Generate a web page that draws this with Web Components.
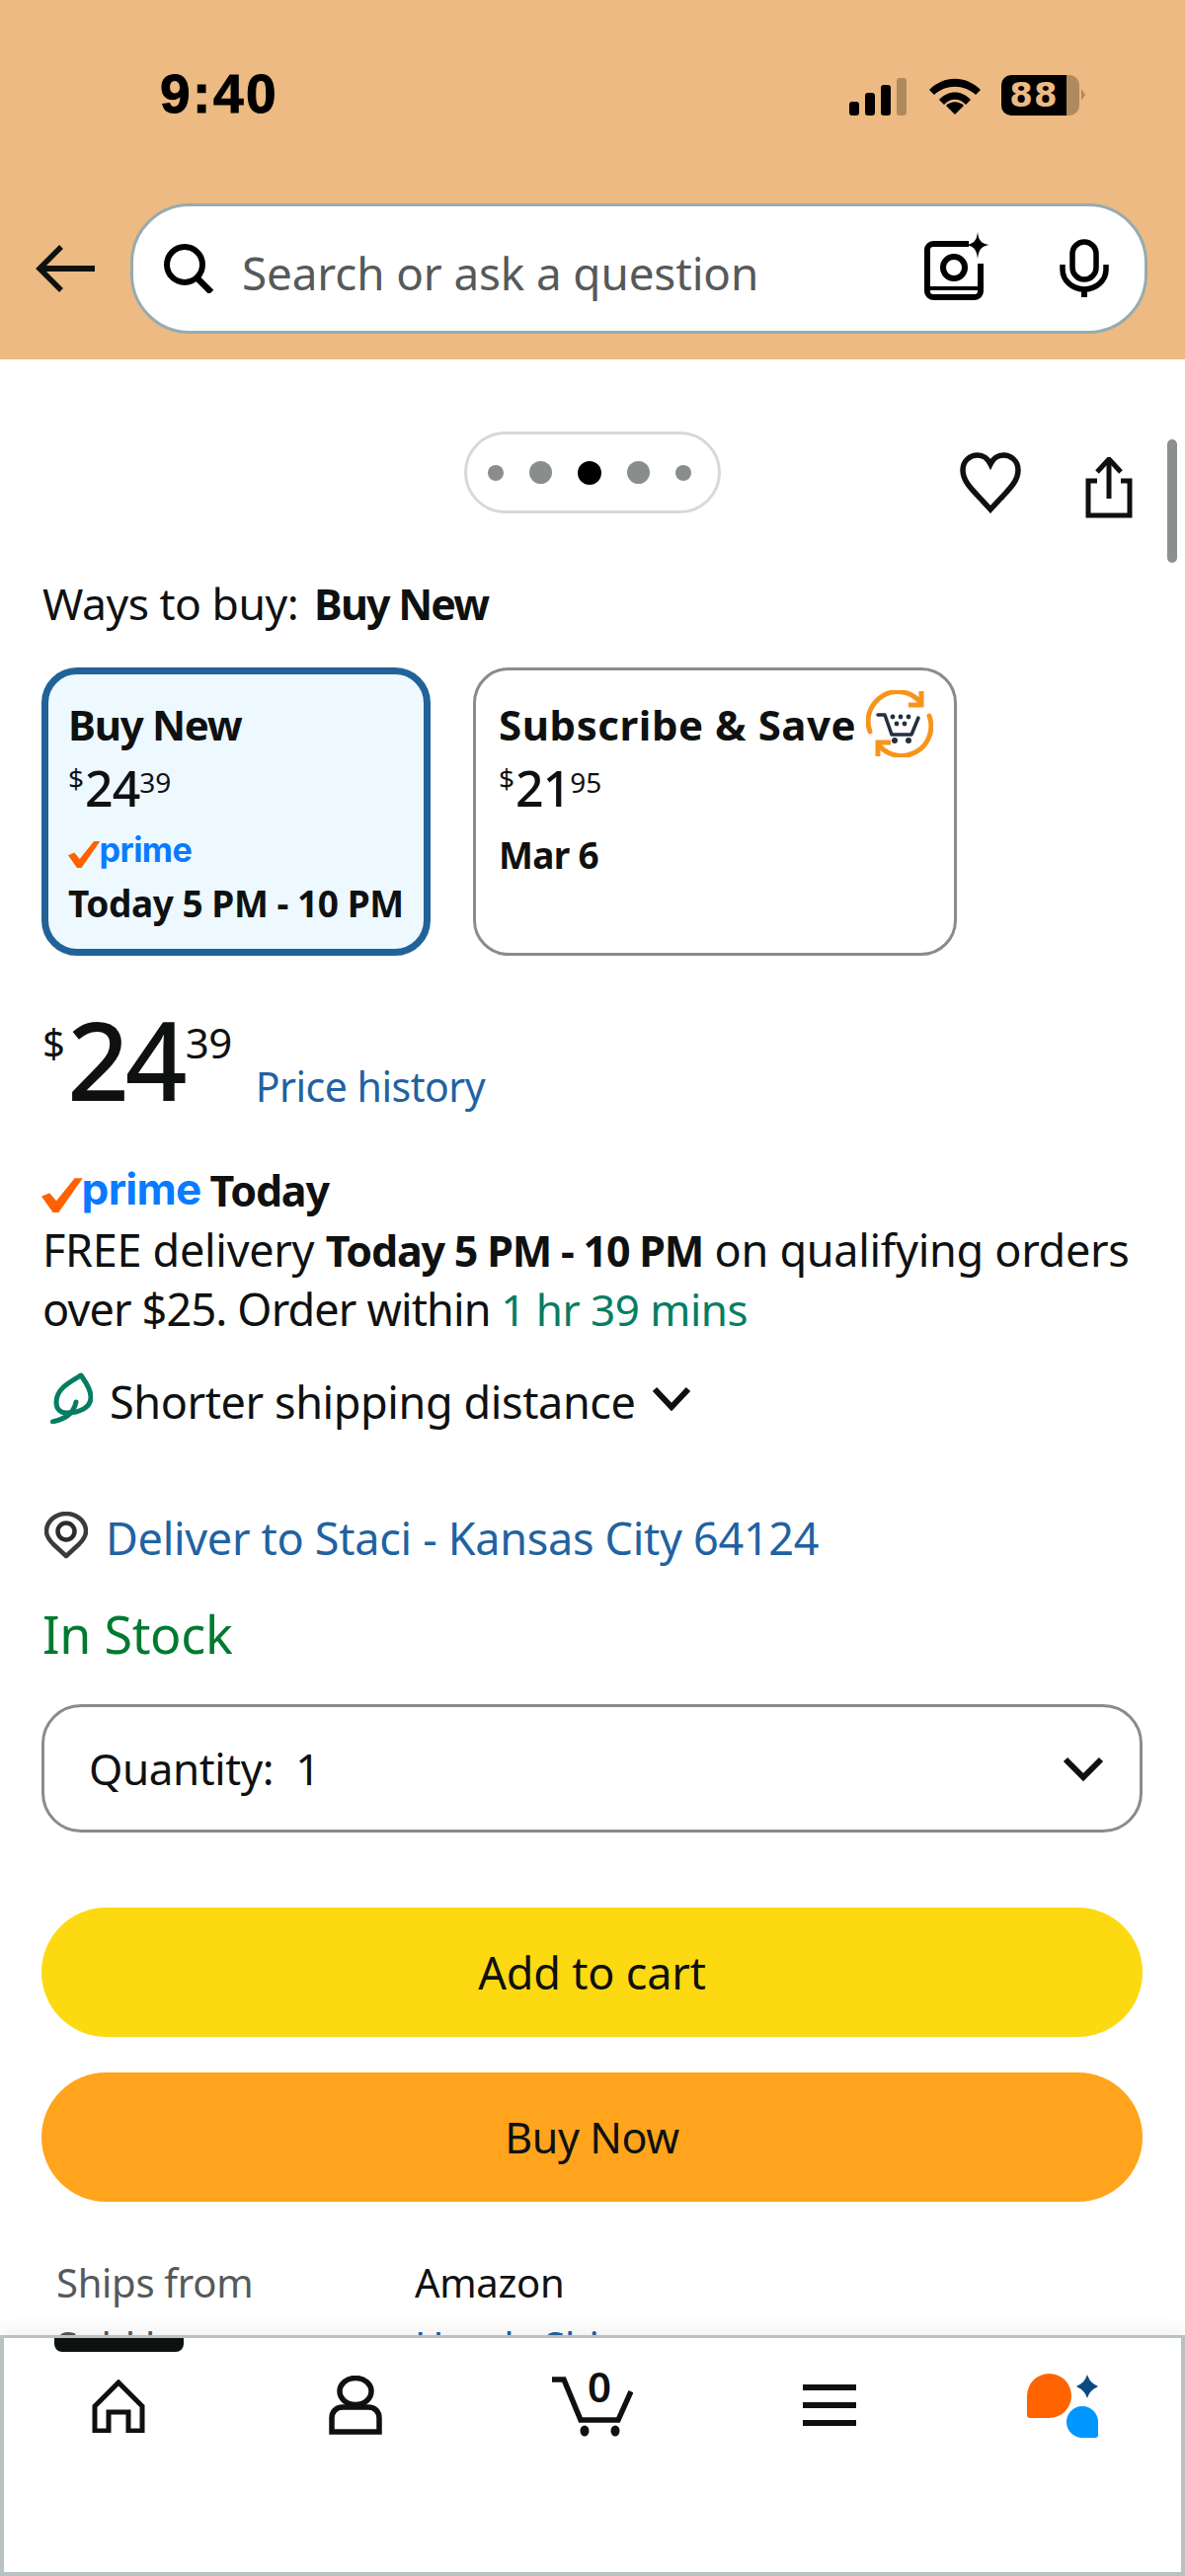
<!DOCTYPE html>
<html lang="en">
<head>
<meta charset="utf-8">
<title>Ways to buy</title>
<style>
  html, body { margin: 0; height: 2609px; overflow: hidden; background: #fff; }
  body { display: flex; flex-direction: column; font-family: "Noto Sans", "Liberation Sans", sans-serif; color: #0f1111; }
  product-page { flex: 1; min-height: 0; }
</style>
</head>
<body>
<app-header></app-header>
<product-page>
  <gallery-controls></gallery-controls>
  <buy-options></buy-options>
  <price-block></price-block>
  <delivery-info></delivery-info>
  <qty-select></qty-select>
  <action-button color="#fdd912" style="margin-top:76px;font-size:45px;letter-spacing:-.2px">Add to cart</action-button>
  <action-button color="#ffa41c" style="margin-top:36px">Buy Now</action-button>
  <seller-info></seller-info>
</product-page>
<bottom-nav></bottom-nav>

<script>
function define(name, html, attrs) {
    customElements.define(name, class extends HTMLElement {
        connectedCallback() {
            if (this.shadowRoot) return;
            var out = html;
            (attrs || []).forEach(function (a) {
                out = out.split('{{' + a + '}}').join(this.getAttribute(a) || '');
            }, this);
            this.attachShadow({ mode: 'open' }).innerHTML = out;
        }
    });
}

var INK = '#0f1111';

define('prime-logo', `
<style>
  :host { display: inline-flex; align-items: flex-end; --s: 1; height: calc(44px * var(--s)); }
  svg { width: calc(36px * var(--s)); height: calc(32px * var(--s)); flex: none; margin-bottom: calc(1px * var(--s)); }
  span { font: 700 calc(38px * var(--s))/calc(44px * var(--s)) "Inter", sans-serif; color: #0a7bff; letter-spacing: calc(-0.6px * var(--s)); margin-left: calc(-1px * var(--s)); }
</style>
<svg viewBox="0 0 36 32"><path d="M0 17l7-3 6 7L29 1h7L15 31h-5z" fill="#ff6200"/></svg><span>prime</span>`);

define('app-header', `
<style>
  :host { display: block; height: 364px; background: #ecba82; box-sizing: border-box; }
  .status { display: flex; align-items: center; height: 80px; padding: 55px 0 0 162px; }
  .time { font: 700 55px/80px "Liberation Sans", sans-serif; color: #000; width: 698px; letter-spacing: 2.5px; -webkit-text-stroke: 1px #000; }
  .bars { width: 58px; height: 38px; margin-top: 6px; }
  .wifi { width: 52px; height: 40px; margin: 2px 0 0 23px; }
  .batt { display: flex; align-items: center; margin: 2px 0 0 21px; }
  .cell { width: 66px; height: 41px; background: #000; border-radius: 10px 0 0 10px; color: #ecba82; font: 700 34px/41px "DejaVu Sans", sans-serif; text-align: center; letter-spacing: 1px; }
  .rest { width: 13px; height: 41px; background: #b08a5f; border-radius: 0 10px 10px 0; }
  .nub { width: 0; height: 0; border-left: 4px solid #b08a5f; border-top: 6px solid transparent; border-bottom: 6px solid transparent; margin-left: 2px; }
  .row { display: flex; align-items: center; padding: 71px 0 0 36px; }
  .back { width: 60px; height: 50px; flex: none; margin-right: 36px; }
  .search { flex: none; width: 1030px; height: 132px; box-sizing: border-box; border: 3px solid #96abb0; border-radius: 60px; background: #fff; display: flex; align-items: center; padding-left: 30px; }
  .mag { width: 52px; height: 50px; flex: none; }
  .ph { font-size: 45.8px; line-height: 60px; color: #565959; margin-left: 28px; flex: 1; letter-spacing: -.1px; margin-top: 8px; }
  .cam { width: 66px; height: 70px; flex: none; margin: -4px 71px 0 0; }
  .mic { width: 50px; height: 60px; flex: none; margin-right: 36px; }
</style>
<div class="status">
  <div class="time">9:40</div>
  <svg class="bars" viewBox="0 0 58 38">
    <rect x="0" y="24" width="10" height="14" rx="3" fill="#000"/><rect x="16" y="15" width="10" height="23" rx="3" fill="#000"/><rect x="32" y="7" width="10" height="31" rx="3" fill="#000"/><rect x="48" y="0" width="10" height="38" rx="3" fill="#b08a5f"/>
  </svg>
  <svg class="wifi" viewBox="0 0 52 40">
    <path d="M0 15C15 0 37 0 52 15l-5 5C35 9 17 9 5 20z" fill="#000"/><path d="M10 25C19 15 33 15 42 25l-5 5C31 23 21 23 15 30z" fill="#000"/><path d="M26 40l-9-9c5-5 13-5 18 0z" fill="#000"/>
  </svg>
  <div class="batt"><div class="cell">88</div><div class="rest"></div><div class="nub"></div></div>
</div>
<div class="row">
  <svg class="back" viewBox="0 0 60 50"><path d="M26 3L4 25l22 22" fill="none" stroke="${INK}" stroke-width="5.5"/><path d="M5 25h55" stroke="${INK}" stroke-width="6"/></svg>
  <div class="search">
    <svg class="mag" viewBox="0 0 52 50"><circle cx="22" cy="21" r="18" fill="none" stroke="#000" stroke-width="6"/><path d="M34 34l15 15" stroke="#000" stroke-width="6.5"/></svg>
    <div class="ph">Search or ask a question</div>
    <svg class="cam" viewBox="0 0 66 70"><path d="M45 12H9a6 6 0 0 0-6 6v42a6 6 0 0 0 6 6h42a6 6 0 0 0 6-6V32" fill="none" stroke="#000" stroke-width="6"/><path d="M3 57h54" stroke="#000" stroke-width="4"/><circle cx="30" cy="36" r="11" fill="none" stroke="#000" stroke-width="6"/><path d="M54 0c1 9 4 12 12 13-8 1-11 5-12 14-1-9-4-13-12-14 8-1 11-4 12-13z" fill="#000"/></svg>
    <svg class="mic" viewBox="0 0 50 58"><rect x="13" y="2" width="24" height="38" rx="12" fill="none" stroke="#000" stroke-width="5.5"/><path d="M3 25v5a22 20 0 0 0 44 0v-5" fill="none" stroke="#000" stroke-width="5.5"/><path d="M25 50v8" stroke="#000" stroke-width="6"/></svg>
  </div>
</div>`);

define('product-page', `
<style>
  :host { display: block; position: relative; overflow: hidden; }
  .scroll { position: absolute; right: 8px; top: 81px; width: 10px; height: 125px; border-radius: 5px; background: #8b8f90; }
</style>
<slot></slot><div class="scroll"></div>`);

define('gallery-controls', `
<style>
  :host { display: grid; grid-template-columns: 470px 260px 1fr; padding-top: 73px; height: 83px; }
  .pill { box-sizing: border-box; height: 83px; border: 3px solid #d5d9d9; border-radius: 42px; display: flex; align-items: center; justify-content: center; gap: 26px; padding-right: 6px; }
  i { display: block; border-radius: 50%; background: #8a8d8d; }
  .sm { width: 16px; height: 16px; } .md { width: 23px; height: 23px; } .on { width: 24px; height: 24px; background: #000; }
  .acts { display: flex; align-items: center; padding-left: 242px; }
  .heart { width: 62px; height: 62px; margin-top: 16px; }
  .share { width: 48px; height: 62px; margin: 26px 0 0 65px; }
</style>
<div></div>
<div class="pill"><i class="sm"></i><i class="md"></i><i class="on"></i><i class="md"></i><i class="sm"></i></div>
<div class="acts">
  <svg class="heart" viewBox="0 0 62 62"><path d="M31 58C14 39 3 31 3 18 3 9 10 3 18 3c6 0 10 3 13 9 3-6 7-9 13-9 8 0 15 6 15 15 0 13-11 21-28 40z" fill="none" stroke="${INK}" stroke-width="5.5" stroke-linejoin="miter"/></svg>
  <svg class="share" viewBox="0 0 48 62"><path d="M12 24H3v35h42V24h-9" fill="none" stroke="${INK}" stroke-width="5"/><path d="M24 42V5" stroke="${INK}" stroke-width="5"/><path d="M12 15L24 2l12 13" fill="none" stroke="${INK}" stroke-width="5"/></svg>
</div>`);

define('buy-options', `
<style>
  :host { display: block; padding: 61px 0 0 43px; }
  .lead { font-size: 44.5px; line-height: 60px; letter-spacing: -.5px; }
  b { font-weight: 700; font-size: 43px; margin-left: 16px; letter-spacing: -1.8px; }
  .cards { display: flex; gap: 43px; margin: 34px 0 0 -1px; }
</style>
<div class="lead">Ways to buy:<b>Buy New</b></div>
<div class="cards">
  <buy-card selected width="394">
    <span slot="title" style="letter-spacing:-1.3px">Buy New</span><span slot="whole">24</span><span slot="frac">39</span>
    <prime-logo slot="badge" style="--s:.9"></prime-logo>
    <span slot="foot">Today 5 PM - 10 PM</span>
  </buy-card>
  <buy-card width="490">
    <span slot="title" style="letter-spacing:.55px">Subscribe &amp; Save</span>
    <svg slot="icon" viewBox="0 0 68 68" width="68" height="68">
      <path d="M4 42A30 30 0 0 1 54 11" fill="none" stroke="#f7941d" stroke-width="5" stroke-linecap="round"/>
      <path d="M56 1v14H43" fill="none" stroke="#f7941d" stroke-width="5"/>
      <path d="M64 26A30 30 0 0 1 14 57" fill="none" stroke="#f7941d" stroke-width="5" stroke-linecap="round"/>
      <path d="M12 67V53h13" fill="none" stroke="#f7941d" stroke-width="5"/>
      <path d="M12 25h7l7 20h20l7-17" fill="none" stroke="#232f3e" stroke-width="3.5" stroke-linecap="round" stroke-linejoin="round"/>
      <g fill="#232f3e"><circle cx="29" cy="51" r="3"/><circle cx="43" cy="51" r="3"/><circle cx="27" cy="27" r="2.4"/><circle cx="35" cy="27" r="2.4"/><circle cx="43" cy="27" r="2.4"/><circle cx="31" cy="34" r="2.4"/><circle cx="39" cy="34" r="2.4"/></g>
    </svg>
    <span slot="whole">21</span><span slot="frac">95</span>
    <span slot="date">Mar 6</span>
  </buy-card>
</div>`);

customElements.define('buy-card', class extends HTMLElement {
    connectedCallback() {
        if (this.shadowRoot) return;
        this.attachShadow({ mode: 'open' }).innerHTML = `
<style>
  :host { display: block; box-sizing: border-box; height: 292px; border: 3px solid #888c8c; border-radius: 36px; padding: 24px 0 0 23px; width: ${this.getAttribute('width')}px; }
  :host([selected]) { border: 7px solid #216299; background: #edf8ff; padding: 20px 0 0 20px; }
  .title { display: flex; align-items: center; height: 60px; font-weight: 700; font-size: 42px; }
  ::slotted(svg) { margin-left: 10px; flex: none; }
  .price { display: flex; height: 56px; margin-top: 7px; font-size: 50px; line-height: 56px; letter-spacing: -1px; font-weight: 500; }
  sup { font-size: 28px; line-height: 32px; vertical-align: top; letter-spacing: 0; padding-top: 6px; font-weight: 400; }
  sup.d { margin-right: 1px; padding-top: 2px; }
  .badge { display: block; margin-top: 15px; }
  .foot { font-weight: 700; font-size: 37px; line-height: 50px; letter-spacing: -.45px; margin-top: 5px; }
  .date { font-weight: 700; font-size: 37px; line-height: 50px; letter-spacing: -.7px; margin-top: 15px; }
</style>
<div class="title"><slot name="title"></slot><slot name="icon"></slot></div>
<div class="price"><sup class="d">$</sup><slot name="whole"></slot><sup><slot name="frac"></slot></sup></div>
<div class="badge"><slot name="badge"></slot></div>
<div class="foot"><slot name="foot"></slot></div>
<div class="date"><slot name="date"></slot></div>`;
    }
});

define('price-block', `
<style>
  :host { display: flex; align-items: flex-start; padding: 54px 0 0 43px; height: 100px; }
  .d { font-size: 40px; line-height: 52px; margin-top: 8px; }
  .w { font-size: 110px; line-height: 100px; letter-spacing: -4px; margin-left: 2px; font-weight: 500; }
  .f { font-size: 42px; line-height: 52px; margin: 8px 0 0 2px; letter-spacing: -.5px; }
  a { font-size: 41px; line-height: 56px; color: #2162a1; margin: 50px 0 0 24px; letter-spacing: -.5px; }
</style>
<span class="d">$</span><span class="w">24</span><span class="f">39</span><a>Price history</a>`);

define('delivery-info', `
<style>
  :host { display: block; padding: 55px 0 0 43px; font-size: 45px; line-height: 59px; }
  .prime { display: flex; align-items: center; height: 56px; margin-left: -1px; }
  .prime b { font-weight: 700; font-size: 43px; letter-spacing: -1.2px; margin-left: 9px; }
  p { margin: 3px 0 0; letter-spacing: -.3px; white-space: nowrap; }
  p b { letter-spacing: -1.2px; font-size: 43px; }
  .s2 { letter-spacing: -.85px; }
  .go { color: #067d62; letter-spacing: -.5px; font-size: 44px; margin-left: -1px; }
  .line { display: flex; align-items: center; }
  .green { height: 60px; margin-top: 33px; letter-spacing: -.4px; }
  .leaf { width: 44px; height: 52px; margin: -6px 17px 0 7px; flex: none; }
  .chev { width: 40px; height: 26px; margin: -6px 0 0 17px; flex: none; }
  .loc { height: 60px; margin-top: 78px; color: #2162a1; letter-spacing: -.3px; }
  .pin { width: 44px; height: 48px; margin: -4px 18px 0 2px; flex: none; }
  .stock { color: #007a30; font-size: 52px; line-height: 70px; margin-top: 33px; letter-spacing: -.3px; }
</style>
<div class="prime"><prime-logo style="--s:1.16"></prime-logo><b>Today</b></div>
<p>FREE delivery <b>Today 5 PM - 10 PM</b> on qualifying orders<br><span class="s2">over $25. Order within</span> <span class="go">1 hr 39 mins</span></p>
<div class="line green">
  <svg class="leaf" viewBox="0 0 44 52"><path d="M32 3C20 10 7 17 7 30c0 7 4 11 10 11 13 0 25-5 25-16 0-9-6-16-10-22z" fill="none" stroke="#067d62" stroke-width="5" stroke-linejoin="round"/><path d="M3.500 50C14 47 24 44 27 30" fill="none" stroke="#067d62" stroke-width="5" stroke-linecap="round"/></svg>
  <span>Shorter shipping distance</span>
  <svg class="chev" viewBox="0 0 40 26"><path d="M3 4l17 18L37 4" fill="none" stroke="${INK}" stroke-width="6"/></svg>
</div>
<div class="line loc">
  <svg class="pin" viewBox="0 0 44 48"><path d="M22 45L9 33C4 28 2 24 2 20a20 18 0 0 1 40 0c0 4-2 8-7 13z" fill="none" stroke="#3a3c3c" stroke-width="4.5" stroke-linejoin="round"/><circle cx="22" cy="20" r="8.500" fill="none" stroke="#2a2c2c" stroke-width="4.5"/></svg>
  <span>Deliver to Staci - Kansas City 64124</span>
</div>
<div class="stock">In Stock</div>`);

define('qty-select', `
<style>
  :host { display: flex; align-items: center; box-sizing: border-box; height: 130px; margin: 36px 43px 0 42px; border: 3px solid #888c8c; border-radius: 40px; padding: 0 36px 0 45px; font-size: 44px; }
  span { flex: 1; letter-spacing: -.4px; }
  svg { width: 42px; height: 26px; }
</style>
<span>Quantity:&nbsp; 1</span>
<svg viewBox="0 0 42 26"><path d="M3 4l18 18L39 4" fill="none" stroke="${INK}" stroke-width="6"/></svg>`);

define('action-button', `
<style>
  :host { display: flex; align-items: center; justify-content: center; height: 131px; margin: 0 43px 0 42px; border-radius: 66px; background: {{color}}; font-size: 43px; letter-spacing: -.4px; color: ${INK}; }
</style>
<slot></slot>`, ['color']);

define('seller-info', `
<style>
  :host { display: grid; grid-template-columns: 363px 1fr; padding: 52px 0 0 57px; font-size: 40px; line-height: 60px; row-gap: 4px; letter-spacing: -.3px; }
  .k { color: #565959; }
  .l { color: #2162a1; }
</style>
<span class="k">Ships from</span><span>Amazon</span>
<span class="k">Sold by</span><span class="l">Handy Ship</span>`);

define('bottom-nav', `
<style>
  :host { display: block; position: relative; box-sizing: border-box; height: 244px; flex: none; background: #fff; border: 4px solid #b9c1c3; border-top-width: 3px; box-shadow: 0 -8px 16px rgba(0,0,0,.05); }
  .tab { position: absolute; left: 51px; top: 0; width: 131px; height: 14px; background: ${INK}; border-radius: 0 0 8px 8px; }
  .grid { display: grid; grid-template-columns: repeat(5, 1fr); margin: 0 -4px; padding-top: 31px; }
  .cell { display: flex; justify-content: center; height: 72px; position: relative; }
  .home { width: 54px; height: 54px; margin-top: 11px; }
  .user { width: 54px; height: 60px; margin-top: 7px; }
  .cart { width: 82px; height: 70px; }
  .menu { width: 54px; height: 42px; margin-top: 16px; }
  .alexa { width: 76px; height: 66px; margin-top: 5px; margin-left: -9px; }
  .count { position: absolute; left: 112px; top: -5px; width: 30px; text-align: center; font: 600 42px/46px "Noto Sans", sans-serif; color: ${INK}; }
</style>
<div class="tab"></div>
<div class="grid">
  <div class="cell"><svg class="home" viewBox="0 0 54 54"><path d="M3 52V27L27 3l24 24v25H37V33H17v19z" fill="none" stroke="${INK}" stroke-width="5"/></svg></div>
  <div class="cell"><svg class="user" viewBox="0 0 54 60"><ellipse cx="27" cy="16" rx="16" ry="13.500" fill="none" stroke="${INK}" stroke-width="5.5"/><path d="M14 32h26c7 0 11 5 11 11v14H3V43c0-6 4-11 11-11z" fill="none" stroke="${INK}" stroke-width="5.5"/></svg></div>
  <div class="cell"><svg class="cart" viewBox="0 0 82 70"><path d="M0 11h12l17 41h38l13-29" fill="none" stroke="${INK}" stroke-width="5.5"/><ellipse cx="33" cy="63" rx="4.500" ry="5.500" fill="${INK}"/><ellipse cx="64" cy="63" rx="4.500" ry="5.500" fill="${INK}"/></svg><span class="count">0</span></div>
  <div class="cell"><svg class="menu" viewBox="0 0 54 42"><path d="M0 3h54M0 21h54M0 39h54" stroke="${INK}" stroke-width="6"/></svg></div>
  <div class="cell"><svg class="alexa" viewBox="0 0 76 66">
    <path d="M2 22.500a22.500 22.500 0 1 1 22.500 22.500H5a3 3 0 0 1-3-3z" fill="#ff6400"/>
    <path d="M74 32a16 16 0 1 0-16 16h13a3 3 0 0 0 3-3z" transform="translate(0 17)" fill="#0096ff"/>
    <path d="M63 1c2 6 5 9 11 12-6 3-9 6-11 12-2-6-5-9-11-12 6-3 9-6 11-12z" fill="#0a4a80"/>
  </svg></div>
</div>`);
</script>
</body>
</html>
